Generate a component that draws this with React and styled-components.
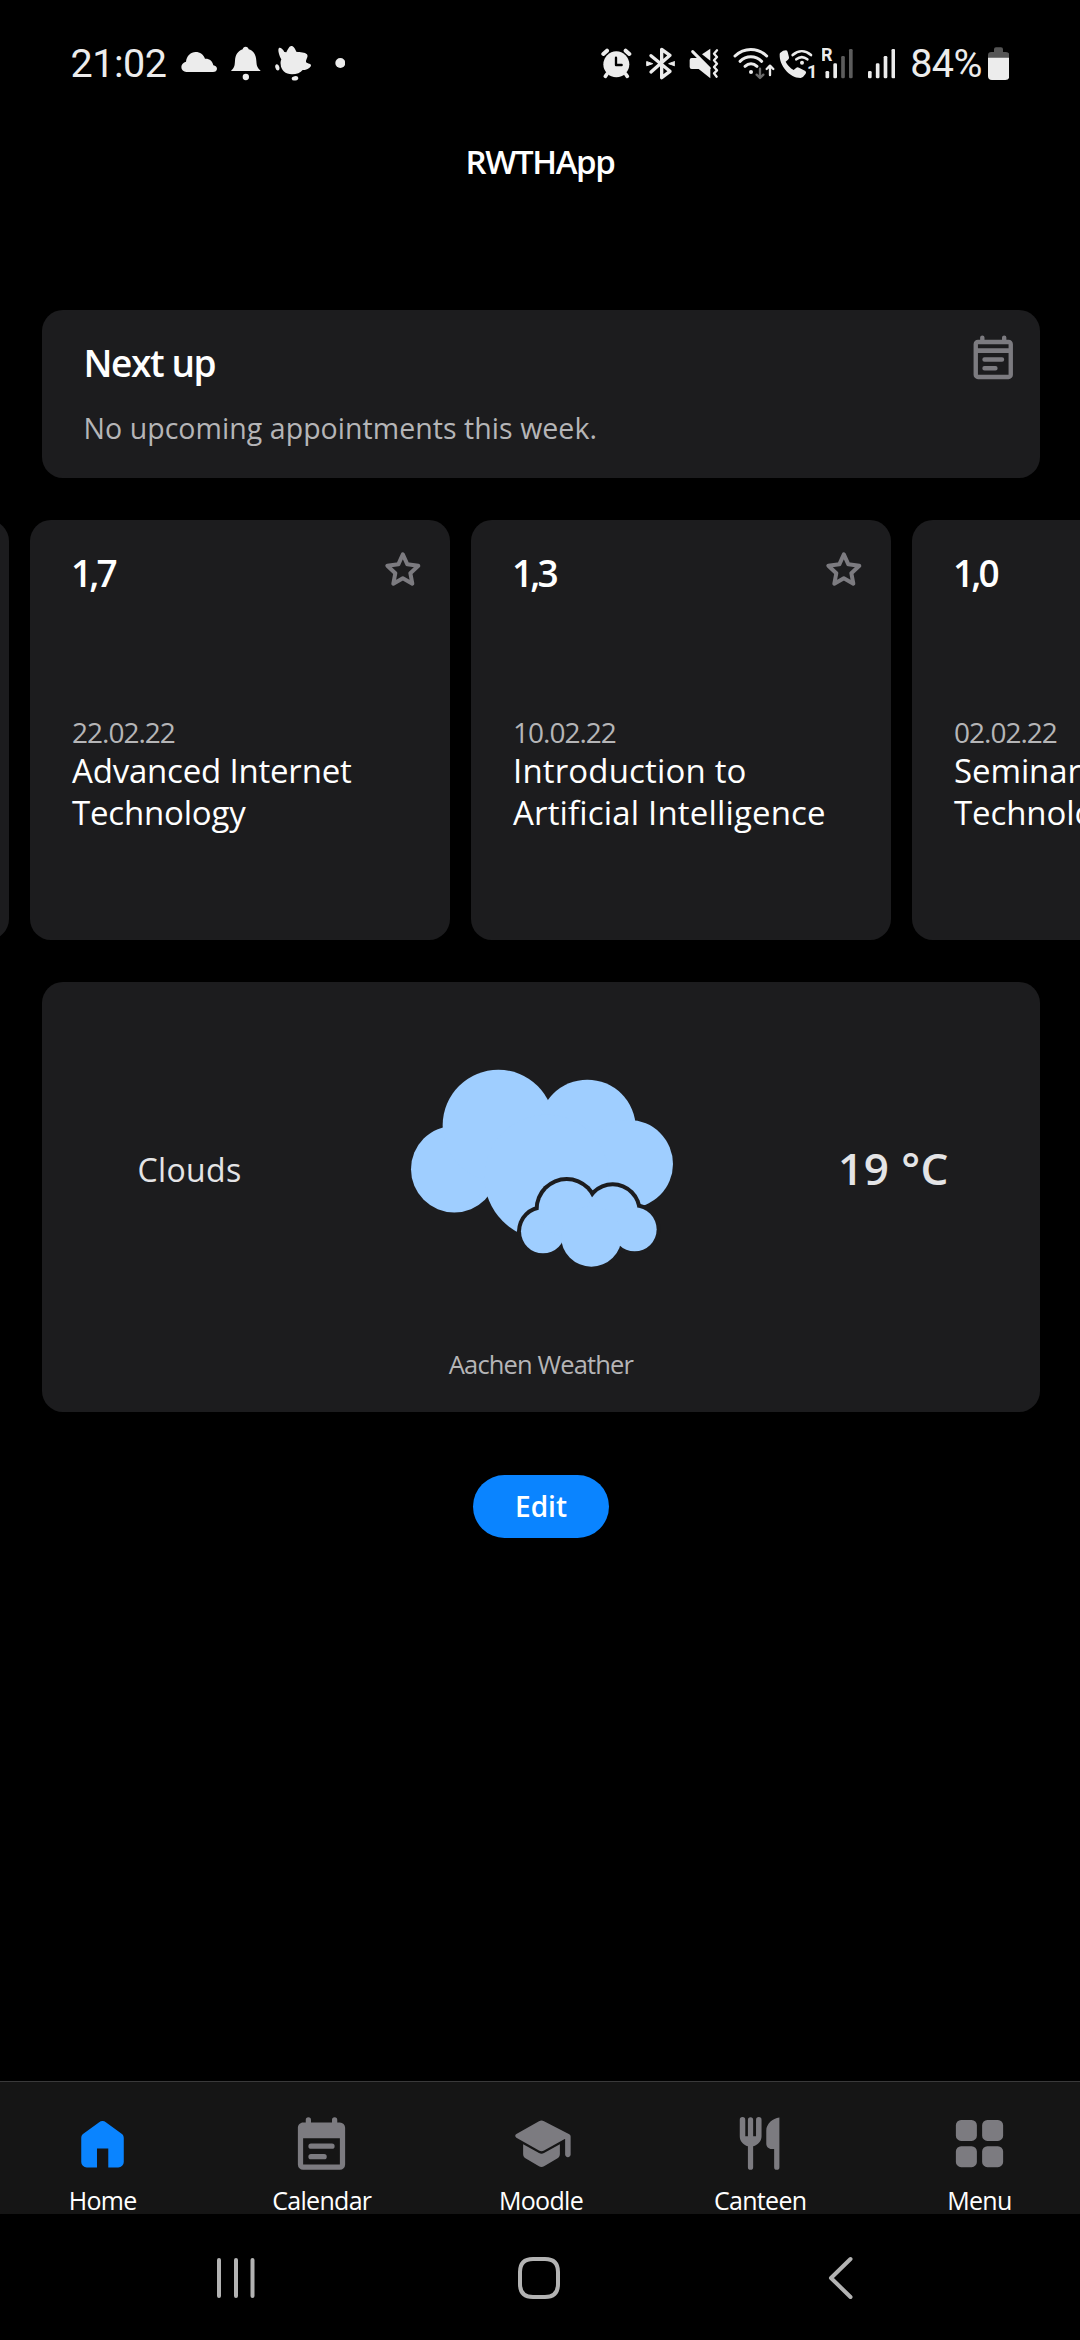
import React from 'react';
import styled, { createGlobalStyle } from 'styled-components';

const color = {
  card: '#1c1c1e',
  bar: '#151515',
  line: '#3a3a3b',
  blue: '#0a84ff',
  icon: '#7c7b80',
  muted: '#b5b5b7',
  status: '#ececec',
  nav: '#b3b3b3',
  cloud: '#9fceff',
};

const GlobalStyle = createGlobalStyle`
  * { box-sizing: border-box; }
  body {
    margin: 0;
    background: #000;
    color: #fff;
    font-family: "Open Sans", "Noto Sans", sans-serif;
  }
  h1, h2, h3, p { margin: 0; font-weight: 400; }
  svg { display: block; flex: none; }
`;

const Screen = styled.div`
  width: 1080px;
  height: 2340px;
  overflow: hidden;
  display: flex;
  flex-direction: column;
  background: #000;
`;

/* ---------- status bar ---------- */

const StatusBar = styled.header`
  height: 128px;
  padding: 0 70.7px 1px 70.5px;
  display: flex;
  align-items: center;
  justify-content: space-between;
  font-family: Roboto, sans-serif;
  color: ${color.status};
`;

const StatusGroup = styled.div`
  display: flex;
  align-items: center;
`;

const StatusText = styled.span`
  width: ${(p) => p.$w}px;
  white-space: nowrap;
  font-size: 39.5px;
  line-height: 48px;
  letter-spacing: -0.5px;
`;

const GlyphSvg = styled.svg`
  width: ${(p) => p.$w / 3}px;
  height: 36.67px;
  margin-left: ${(p) => p.$gap / 3}px;
  fill: currentColor;
  stroke: none;
  stroke-linecap: round;
  stroke-linejoin: round;
`;

function Glyph({ x, w, gap = 0, children }) {
  return (
    <GlyphSvg $w={w} $gap={gap} viewBox={`${x} 75 ${w} 110`}>
      {children}
    </GlyphSvg>
  );
}

const SignalText = styled.text`
  font: 700 ${(p) => p.$size}px Roboto, sans-serif;
`;

function Bars({ x, dim }) {
  const tops = [153, 130, 108, 87];
  return tops.map((y, i) => (
    <rect
      key={y}
      x={x + i * 23.5}
      y={y}
      width="11"
      height={175 - y}
      rx="4"
      fill={dim && i > 1 ? '#5c5c5c' : 'currentColor'}
    />
  ));
}

function Status() {
  return (
    <StatusBar>
      <StatusGroup>
        <StatusText $w={110.5}>21:02</StatusText>
        <Glyph x={394} w={109}>
          <path d="M410 156a15 15 0 0 1-15-15c0-8 6-14 14-16 2-17 14-29 29-29 13 0 24 8 28 20 13-1 23 7 25 20 7 2 11 5 11 10 0 6-5 10-12 10z" />
        </Glyph>
        <Glyph x={545} w={89} gap={42}>
          <path d="M589 80c5 0 8 3 9 8 16 5 22 18 23 34 1 16 3 21 12 29v2h-87v-2c9-8 10-13 11-29 1-16 8-29 23-34 1-5 4-8 9-8z" />
          <circle cx="589.500" cy="171" r="9.500" />
        </Glyph>
        <Glyph x={677} w={110} gap={43}>
          <path d="M689 84c5-2 12 4 16 12l6 1c4-8 9-19 15-19 7 0 11 8 15 17 12 2 26 1 32 8 5 7-3 14-3 22 0 5 14 5 15 10 1 7-12 16-25 15-6 8-18 13-32 13-20 0-33-12-34-30-1-5 0-10 2-15-6-9-12-30-7-34z" />
          <ellipse cx="684" cy="142" rx="6" ry="9.500" transform="rotate(-15 684 142)" />
          <ellipse cx="737" cy="175" rx="10" ry="6.500" transform="rotate(-12 737 175)" />
        </Glyph>
        <Glyph x={854} w={32} gap={68}>
          <circle cx="870" cy="129" r="15" />
        </Glyph>
      </StatusGroup>

      <StatusGroup>
        <Glyph x={64} w={92}>
          <circle cx="110" cy="133" r="39" />
          <g stroke="currentColor" fill="none" strokeWidth="10">
            <path d="M71 102 82 92M149 102 138 92" strokeWidth="12" />
            <path d="M82 162 77 169M138 162 143 169" strokeWidth="11" />
          </g>
          <path d="M109 113v22h17" fill="none" stroke="#000" strokeWidth="7" />
        </Glyph>
        <Glyph x={198} w={88} gap={42}>
          <path
            d="M213 107 270 154 245 173V88L270 106 213 156"
            fill="none"
            stroke="currentColor"
            strokeWidth="10"
          />
          <path d="M201 125 218 131 201 137zM283 125 266 131 283 137z" strokeWidth="3" stroke="currentColor" />
        </Glyph>
        <Glyph x={329} w={90} gap={43}>
          <path d="M337 114h20l36 36v25l-35-28h-21q-6 0-6-6v-21q0-6 6-6z" />
          <path d="M393 86v36l-25-19z" />
          <path d="M340 95 390 145" stroke="currentColor" strokeWidth="9" />
          <path
            d="M413 91 404 101 413 111 404 121 413 131 404 141 413 151 404 160 412 170"
            fill="none"
            stroke="currentColor"
            strokeWidth="7"
          />
        </Glyph>
        <Glyph x={459} w={126} gap={40}>
          <g fill="none" stroke="currentColor" strokeWidth="9">
            <path d="M465 108c27-26 68-26 95 0" />
            <path d="M480 124c19-18 46-18 65 0" />
            <path d="M495 139c11-10 25-10 36 0" />
          </g>
          <circle cx="513" cy="156" r="6" />
          <path d="M540 146v27M530 164l10 10 10-10" fill="none" stroke="#6a6a6a" strokeWidth="7" />
          <path d="M570 165v-27M560 147l10-10 10 10" fill="none" stroke="currentColor" strokeWidth="7" />
        </Glyph>
        <Glyph x={597} w={111} gap={12}>
          <path d="M601 98q8-7 17-7 4 0 5 5l4 16q1 4-3 7l-7 6q8 16 24 25l8-7q4-3 8 0l19 10q4 3 1 8-7 11-15 13c-36 0-64-40-63-69 0-3 0-5 2-7z" />
          <g fill="none" stroke="currentColor" strokeWidth="8">
            <path d="M638 105c17-15 38-15 55 0" />
            <path d="M649 118c10-8 23-8 33 0" />
          </g>
          <circle cx="666" cy="128" r="6" />
          <SignalText $size={54} x="681" y="173">1</SignalText>
        </Glyph>
        <Glyph x={66} w={93} gap={19}>
          <SignalText $size={54} x="63" y="124">R</SignalText>
          <g>
            <Bars x={76.500} dim />
          </g>
        </Glyph>
        <Glyph x={203} w={83} gap={44}>
          <Bars x={203} />
        </Glyph>
        <StatusGroup>
          <Glyph x={286} w={45} />
          <StatusText $w={77.5}>84%</StatusText>
        </StatusGroup>
        <Glyph x={564} w={65}>
          <path d="M564 114v-8q0-10 10-10h8v-8q0-6 6-6h15q6 0 6 6v8h9q10 0 10 10v8z" fill="#555" />
          <path d="M564 113h64v55q0 12-12 12h-40q-12 0-12-12z" />
        </Glyph>
      </StatusGroup>
    </StatusBar>
  );
}

/* ---------- page ---------- */

const TitleBar = styled.div`
  height: 66px;
  padding-top: 2px;
  display: flex;
  align-items: center;
  justify-content: center;
`;

const AppTitle = styled.h1`
  font-size: 33px;
  font-weight: 600;
  line-height: 48px;
  letter-spacing: -1.4px;
`;

const Content = styled.main`
  flex: 1;
  min-height: 0;
  padding-top: 116px;
  display: flex;
  flex-direction: column;
`;

const Card = styled.section`
  background: ${color.card};
  border-radius: 21px;
`;

const NextCard = styled(Card)`
  height: 168px;
  margin: 0 40px 0 42px;
  padding: 21px 21px 0 41.5px;
  display: flex;
  justify-content: space-between;
  align-items: flex-start;
`;

const NextBody = styled.div`
  padding-top: 8px;
`;

const Heading = styled.h2`
  font-size: 37px;
  font-weight: 600;
  line-height: 48px;
  letter-spacing: ${(p) => p.$track}px;
`;

const NextText = styled.p`
  margin-top: 21px;
  font-size: 28.5px;
  line-height: 40px;
  letter-spacing: 0.05px;
  color: ${color.muted};
`;

const Icon = styled.svg`
  width: ${(p) => p.$size}px;
  height: ${(p) => p.$size}px;
  fill: ${(p) => (p.$active ? color.blue : color.icon)};
`;

const Strip = styled.div`
  margin: 42px 0 42px -411px;
  display: flex;
  gap: 21px;
`;

const GradeCard = styled(Card)`
  flex: none;
  width: 420px;
  height: 420px;
  padding: 21px 21px 0 42px;
`;

const GradeTop = styled.div`
  height: 56px;
  display: flex;
  justify-content: space-between;
  align-items: flex-start;

  ${Heading} {
    margin-left: -1px;
    padding-top: 8px;
  }
`;

const GradeDate = styled.p`
  margin-top: 117px;
  font-size: 28px;
  line-height: 36px;
  letter-spacing: -1px;
  color: ${color.muted};
`;

const GradeName = styled.h3`
  font-size: 33px;
  line-height: 42px;
  letter-spacing: ${(p) => p.$track}px;
  white-space: pre-line;
`;

const WeatherCard = styled(Card)`
  height: 430px;
  margin: 0 40px 0 42px;
  padding-top: 8px;
`;

const WeatherRow = styled.div`
  height: 356px;
  display: grid;
  grid-template-columns: 295px 1fr 293px;
  align-items: center;
  justify-items: center;
  color: #e4e4e6;
`;

const Condition = styled.p`
  font-size: 32px;
  line-height: 44px;
  letter-spacing: 0.35px;
  padding-top: 4px;
`;

const Temperature = styled.p`
  font-size: 44px;
  font-weight: 600;
  line-height: 58px;
  letter-spacing: 0.5px;
`;

const CloudArt = styled.svg`
  width: 264px;
  height: 198.33px;
`;

const Caption = styled.p`
  text-align: center;
  font-size: 25.5px;
  line-height: 36px;
  letter-spacing: -0.85px;
  color: ${color.muted};
`;

const EditButton = styled.button`
  align-self: center;
  width: 136px;
  height: 63px;
  margin: 63px 0 0 2px;
  padding: 0 0 2px;
  border: 0;
  border-radius: 31.5px;
  background: ${color.blue};
  color: #fff;
  font: 600 28px "Open Sans", sans-serif;
`;

function CalendarOutline() {
  return (
    <Icon $size={52.5} viewBox="0 0 24 24">
      <path
        fillRule="evenodd"
        d="M5 4h1V3a1 1 0 0 1 2 0v1h8V3a1 1 0 0 1 2 0v1h1a2 2 0 0 1 2 2v14a2 2 0 0 1-2 2H5a2 2 0 0 1-2-2V6c0-1.100.9-2 2-2zM5 6.100v1.800h14V6.100zM5 10v10h14V10zM8 12h8a1 1 0 0 1 0 2H8a1 1 0 0 1 0-2zM8 16h5a1 1 0 0 1 0 2H8a1 1 0 0 1 0-2z"
      />
    </Icon>
  );
}

const StarIcon = styled(Icon)`
  fill: none;
  stroke: ${color.icon};
  stroke-width: 12;
  stroke-linejoin: round;
`;

function Star() {
  return (
    <StarIcon $size={52.5} viewBox="21 18 157.500 157.500">
      <path d="M98.500 58 112 88 145 92 121 114.500 127 146 98.500 130 70 146 76 114.500 52 92 85 88z" />
    </StarIcon>
  );
}

function Grade({ grade, date, name, track }) {
  return (
    <GradeCard>
      <GradeTop>
        <Heading $track={-2.9}>{grade}</Heading>
        <Star />
      </GradeTop>
      <GradeDate>{date}</GradeDate>
      <GradeName $track={track}>{name}</GradeName>
    </GradeCard>
  );
}

const smallCloud = [
  [489, 575, 66],
  [560, 508, 84],
  [698, 515, 75],
  [764, 569, 66],
  [634, 590, 91],
];

function Clouds() {
  return (
    <CloudArt viewBox="90 88 792 595" fill={color.cloud}>
      <circle cx="223" cy="388.500" r="130" />
      <circle cx="355" cy="257" r="167" />
      <circle cx="622" cy="265" r="145" />
      <circle cx="747" cy="373" r="132" />
      <circle cx="500" cy="412" r="187" />
      {smallCloud.map(([x, y, r]) => (
        <circle key={`edge-${x}`} cx={x} cy={y} r={r + 12} fill={color.card} />
      ))}
      {smallCloud.map(([x, y, r]) => (
        <circle key={x} cx={x} cy={y} r={r} />
      ))}
    </CloudArt>
  );
}

/* ---------- bottom bars ---------- */

const TabBar = styled.nav`
  flex: none;
  height: 133px;
  border-top: 1px solid ${color.line};
  background: ${color.bar};
  display: flex;
  justify-content: center;
`;

const Tab = styled.div`
  flex: none;
  width: 219.2px;
  padding: 30.4px 0 0 2px;
  display: flex;
  flex-direction: column;
  align-items: center;
  gap: 11px;
`;

const TabLabel = styled.span`
  font-size: 25px;
  line-height: 28px;
  letter-spacing: -0.7px;
`;

const NavBar = styled.footer`
  flex: none;
  height: 126px;
  padding: 2px 0 0 85px;
  display: flex;
  align-items: center;
`;

const NavButton = styled.div`
  width: 302.5px;
  display: flex;
  justify-content: center;
`;

const NavIcon = styled.svg`
  width: 46px;
  height: 46px;
  fill: none;
  stroke: ${color.nav};
  stroke-width: 4;
  stroke-linecap: round;
  stroke-linejoin: round;
`;

const tabs = [
  {
    label: 'Home',
    active: true,
    path: 'M6 21.100a2.100 2.100 0 0 1-2.100-2.100V9.900c0-.7.3-1.200.8-1.600l5.900-4.300c1-.7 1.800-.7 2.800 0l5.900 4.300c.5.4.8.9.8 1.600V19a2.100 2.100 0 0 1-2.100 2.100h-3.800v-7.200H9.900v7.200z',
  },
  {
    label: 'Calendar',
    path: 'M5 4h1V3a1 1 0 0 1 2 0v1h8V3a1 1 0 0 1 2 0v1h1a2 2 0 0 1 2 2v14a2 2 0 0 1-2 2H5a2 2 0 0 1-2-2V6c0-1.100.9-2 2-2zM5 10v10h14V10zM8 12h8a1 1 0 0 1 0 2H8a1 1 0 0 1 0-2zM8 16h5a1 1 0 0 1 0 2H8a1 1 0 0 1 0-2z',
  },
  {
    label: 'Moodle',
    path: 'M5 12.300v3.700c0 .73.4 1.410 1.040 1.760l5 2.900c.6.33 1.320.33 1.920 0l5-2.900c.64-.35 1.040-1.030 1.040-1.760v-3.700l-6.040 3.300c-.6.36-1.320.36-1.920 0zM11.040 3.520l-8.600 4.900c-.6.38-.6 1 0 1.360l8.600 4.900c.6.33 1.320.33 1.920 0L21 10.150V16.200c0 .55.45 1 1.050 1s1.050-.45 1.050-1V9.400c0-.37-.2-.7-.52-.88l-9.620-5a2.040 2.040 0 0 0-1.920 0z',
  },
  {
    label: 'Canteen',
    path: 'M10.300 3v6.200H9.200V3a1 1 0 0 0-2 0v6.200H6.200V3a1 1 0 0 0-2.100 0v6.200c0 1.900 1.300 3.300 3.100 3.800V21a1 1 0 0 0 2 0v-8c1.900-.5 3.200-1.900 3.200-3.800V3a1 1 0 0 0-2.100 0zM14.200 7v5c0 1.200.9 2.100 2 2.100h1V21a1 1 0 0 0 2 0V2.100c-2.600.2-5 2.600-5 4.900z',
  },
  {
    label: 'Menu',
    path: 'M5 3h4a2 2 0 0 1 2 2v4a2 2 0 0 1-2 2H5a2 2 0 0 1-2-2V5a2 2 0 0 1 2-2zM15 3h4a2 2 0 0 1 2 2v4a2 2 0 0 1-2 2h-4a2 2 0 0 1-2-2V5a2 2 0 0 1 2-2zM5 13h4a2 2 0 0 1 2 2v4a2 2 0 0 1-2 2H5a2 2 0 0 1-2-2v-4a2 2 0 0 1 2-2zM15 13h4a2 2 0 0 1 2 2v4a2 2 0 0 1-2 2h-4a2 2 0 0 1-2-2v-4a2 2 0 0 1 2-2z',
  },
];

const navIcons = [
  'M6 5V41M23 5V41M39.500 5V41',
  'M17 4H29Q42 4 42 17V29Q42 42 29 42H17Q4 42 4 29V17Q4 4 17 4z',
  'M32.500 4 13 23 32.500 42',
];

export default function App() {
  return (
    <Screen>
      <GlobalStyle />
      <Status />
      <TitleBar>
        <AppTitle>RWTHApp</AppTitle>
      </TitleBar>
      <Content>
        <NextCard>
          <NextBody>
            <Heading $track={-1.4}>Next up</Heading>
            <NextText>No upcoming appointments this week.</NextText>
          </NextBody>
          <CalendarOutline />
        </NextCard>
        <Strip>
          <GradeCard />
          <Grade grade="1,7" date="22.02.22" name="Advanced Internet Technology" track={-0.2} />
          <Grade grade="1,3" date="10.02.22" name="Introduction to Artificial Intelligence" track={0.16} />
          <Grade grade="1,0" date="02.02.22" name={'Seminar\nTechnology'} track={-0.1} />
        </Strip>
        <WeatherCard>
          <WeatherRow>
            <Condition>Clouds</Condition>
            <Clouds />
            <Temperature>19 °C</Temperature>
          </WeatherRow>
          <Caption>Aachen Weather</Caption>
        </WeatherCard>
        <EditButton>Edit</EditButton>
      </Content>
      <TabBar>
        {tabs.map((t) => (
          <Tab key={t.label}>
            <Icon $size={63} $active={t.active} viewBox="0 0 24 24">
              <path fillRule="evenodd" d={t.path} />
            </Icon>
            <TabLabel>{t.label}</TabLabel>
          </Tab>
        ))}
      </TabBar>
      <NavBar>
        {navIcons.map((d) => (
          <NavButton key={d}>
            <NavIcon viewBox="0 0 46 46">
              <path d={d} />
            </NavIcon>
          </NavButton>
        ))}
      </NavBar>
    </Screen>
  );
}
